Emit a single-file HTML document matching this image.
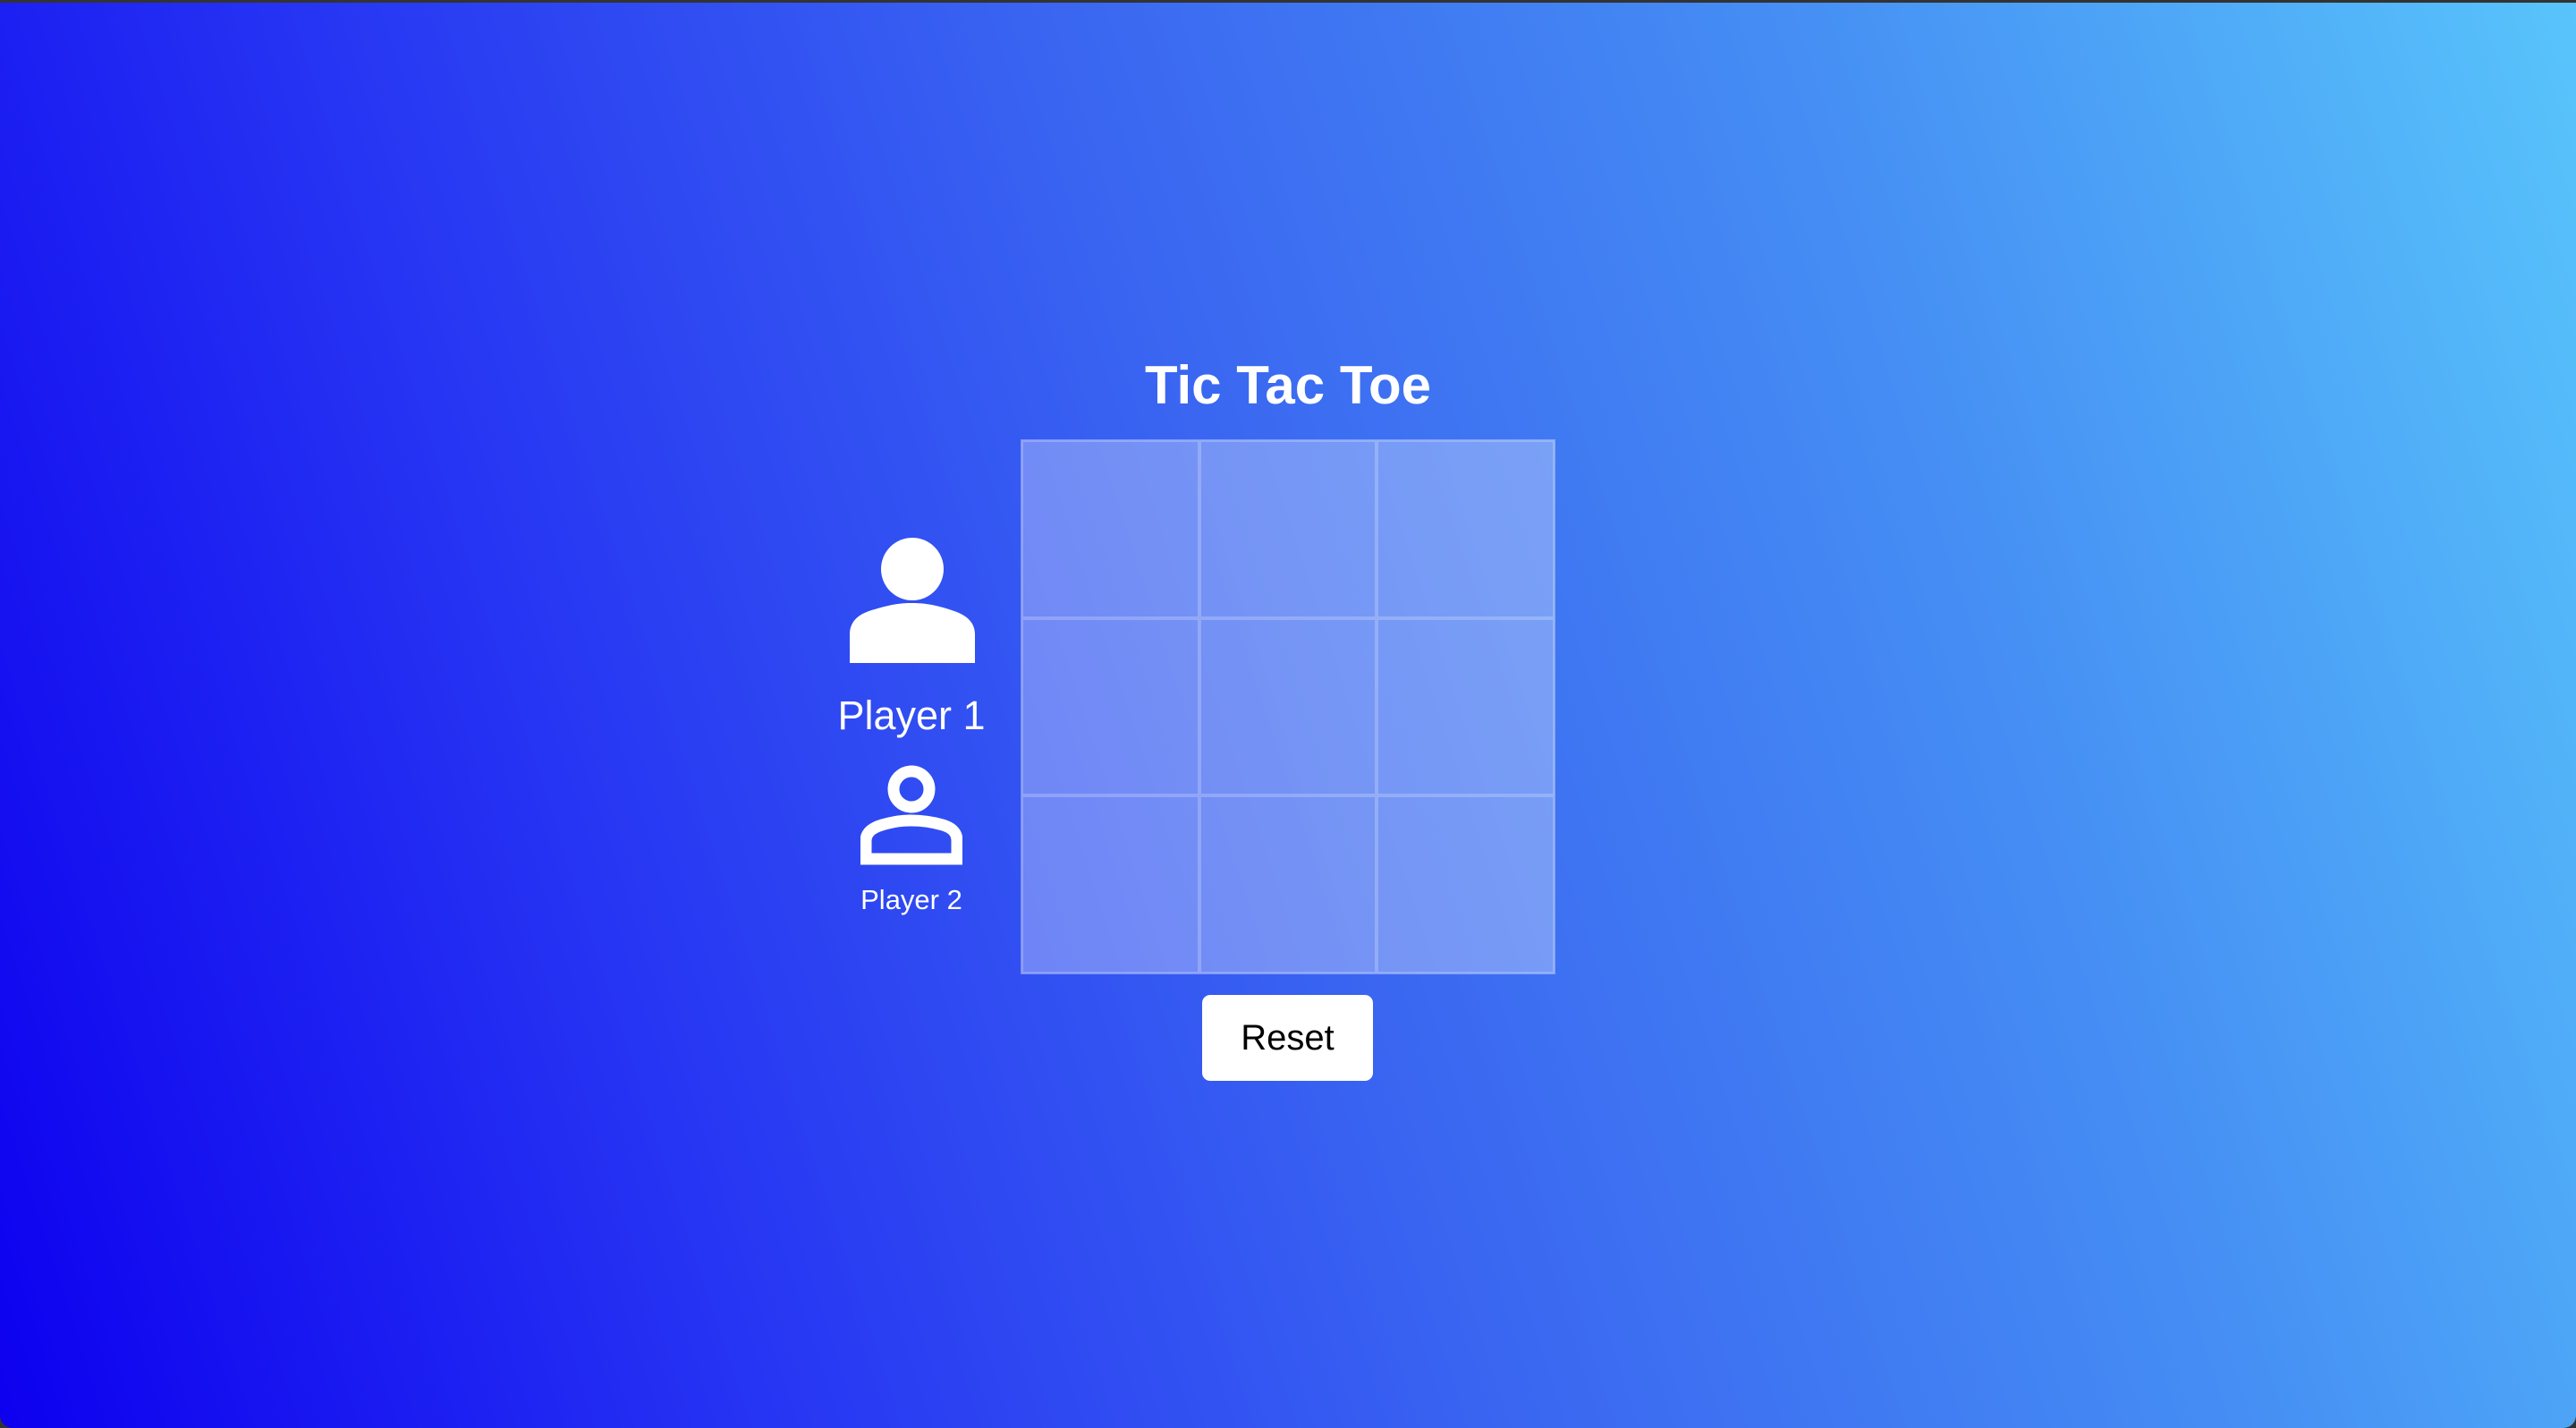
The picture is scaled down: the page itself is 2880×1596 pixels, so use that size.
<!DOCTYPE html>
<html><head><meta charset="utf-8"><style>
html,body{margin:0;padding:0;width:2880px;height:1596px;overflow:hidden;background:#333;}
.win{position:absolute;left:0;top:3px;width:2880px;height:1593px;border-radius:0 0 14px 14px;
background:linear-gradient(72deg,#0d00ef 0%,#2634f3 25%,#3a66f1 50%,#4690f4 75%,#58c4fb 100%);font-family:"Liberation Sans",sans-serif;color:#fff;}
h1{position:absolute;left:0;width:2880px;top:388px;margin:0;text-align:center;font-size:60px;font-weight:bold;line-height:80px;}
.board{position:absolute;left:1141px;top:488px;width:598px;height:598px;display:grid;grid-template-columns:repeat(3,1fr);grid-template-rows:repeat(3,1fr);border:1px solid rgba(255,255,255,.35);box-sizing:border-box;}
.board div{background:rgba(255,255,255,.3);border:2px solid rgba(255,255,255,.22);}
.p{position:absolute;text-align:center;width:300px;}
.btn{position:absolute;left:1344px;top:1109px;width:191px;height:96px;background:#fff;border-radius:9px;color:#000;font-size:40px;line-height:96px;text-align:center;}
</style></head><body><div class="win">
<h1>Tic Tac Toe</h1>
<svg style="position:absolute;left:948px;top:598px" width="144" height="140" viewBox="0 0 144 140">
<circle cx="72" cy="35" r="35" fill="#fff"/>
<path d="M2 140 V108 C2 92 14 84 30 80 C50 74 60 73 72 73 C86 73 98 75 116 81 C132 86 142 94 142 108 V140 Z" fill="#fff"/>
</svg>
<div class="p" style="left:869px;top:765px;font-size:45px;line-height:64px">Player 1</div>
<svg style="position:absolute;left:962px;top:852px" width="114" height="112" viewBox="0 0 114 112">
<circle cx="57" cy="27" r="20" fill="none" stroke="#fff" stroke-width="13"/>
<path d="M6 105 V85 C6 75 14 70 24 67 C38 63 46 62 57 62 C68 62 78 63 92 67 C102 70 108 75 108 85 V105 Z" fill="none" stroke="#fff" stroke-width="13"/>
</svg>
<div class="p" style="left:869px;top:982px;font-size:31px;line-height:42px">Player 2</div>
<div class="board"><div></div><div></div><div></div><div></div><div></div><div></div><div></div><div></div><div></div></div>
<div class="btn">Reset</div>
</div></body></html>
